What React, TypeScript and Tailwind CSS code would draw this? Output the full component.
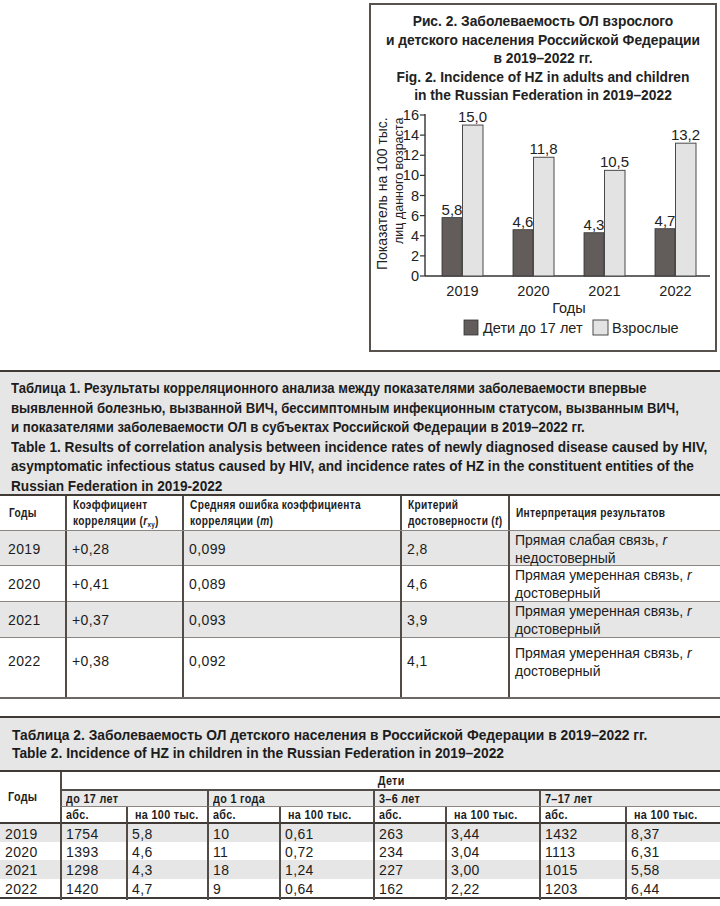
import React from 'react';

const sans = "font-['Liberation_Sans',Arial,sans-serif]";

const bars = [
  { year: '2019', kids: 5.8, adults: 15.0 },
  { year: '2020', kids: 4.6, adults: 11.8 },
  { year: '2021', kids: 4.3, adults: 10.5 },
  { year: '2022', kids: 4.7, adults: 13.2 },
];

const Chart = () => {
  const base = 276;
  const k = 161 / 16;
  const fmt = (v: number) => v.toFixed(1).replace('.', ',');
  return (
    <svg width={344} height={244} viewBox="371 106 344 244" className="block">
      <g fontFamily="Liberation Sans, Arial, sans-serif" fill="#222">
        {[0, 2, 4, 6, 8, 10, 12, 14, 16].map((v) => (
          <g key={v}>
            <line x1={420} x2={425} y1={base - v * k} y2={base - v * k} stroke="#333" strokeWidth={1.2} />
            <text x={419} y={base - v * k + 5} fontSize={14.5} textAnchor="end">{v}</text>
          </g>
        ))}
        <line x1={425} x2={425} y1={114} y2={base} stroke="#333" strokeWidth={1.4} />
        <line x1={425} x2={710} y1={base} y2={base} stroke="#333" strokeWidth={1.4} />
        {bars.map((b, i) => {
          const x = 442 + 71 * i;
          const hk = b.kids * k;
          const ha = b.adults * k;
          return (
            <g key={b.year}>
              <rect x={x} y={base - hk} width={20} height={hk} fill="#625d5a" stroke="#333" strokeWidth={0.8} />
              <rect x={x + 20.5} y={base - ha} width={20.5} height={ha} fill="#e3e3e3" stroke="#4a4a4a" strokeWidth={1} />
              <text x={x + 10} y={base - hk - 3} fontSize={15} textAnchor="middle">{fmt(b.kids)}</text>
              <text x={x + 30.5} y={base - ha - 3} fontSize={15} textAnchor="middle">{fmt(b.adults)}</text>
              <text x={x + 20.5} y={295.5} fontSize={14.5} textAnchor="middle">{b.year}</text>
            </g>
          );
        })}
        <text x={569} y={313} fontSize={14.5} textAnchor="middle">Годы</text>
        <rect x={464} y={320} width={14} height={15} fill="#625d5a" stroke="#333" strokeWidth={0.8} />
        <text x={483} y={333} fontSize={14.5}>Дети до 17 лет</text>
        <rect x={593} y={320} width={15} height={15} fill="#e3e3e3" stroke="#4a4a4a" strokeWidth={1} />
        <text x={612} y={333} fontSize={14.5}>Взрослые</text>
        <text transform="translate(387 270) rotate(-90)" fontSize={14}>Показатель на 100 тыс.</text>
        <text transform="translate(402.5 244) rotate(-90)" fontSize={12.5}>лиц данного возраста</text>
      </g>
    </svg>
  );
};

const t1Rows = [
  { y: '2019', r: '+0,28', m: '0,099', t: '2,8', a: 'Прямая слабая связь, ', b: 'недостоверный', h: 'h-[35px]', bg: 'bg-[#e6e6e6]', pb: '' },
  { y: '2020', r: '+0,41', m: '0,089', t: '4,6', a: 'Прямая умеренная связь, ', b: 'достоверный', h: 'h-[36px]', bg: 'bg-white', pb: '' },
  { y: '2021', r: '+0,37', m: '0,093', t: '3,9', a: 'Прямая умеренная связь, ', b: 'достоверный', h: 'h-[36px]', bg: 'bg-[#e6e6e6]', pb: '' },
  { y: '2022', r: '+0,38', m: '0,092', t: '4,1', a: 'Прямая умеренная связь, ', b: 'достоверный', h: 'h-[60px]', bg: 'bg-white', pb: 'pb-[12px]' },
];

const t2Rows = [
  ['2019', '1754', '5,8', '10', '0,61', '263', '3,44', '1432', '8,37'],
  ['2020', '1393', '4,6', '11', '0,72', '234', '3,04', '1113', '6,31'],
  ['2021', '1298', '4,3', '18', '1,24', '227', '3,00', '1015', '5,58'],
  ['2022', '1420', '4,7', '9', '0,64', '162', '2,22', '1203', '6,44'],
];

const cols1 = 'grid grid-cols-[65px_117px_218px_108px_212px]';
const cols2 = 'grid grid-cols-[60px_66px_81px_72px_94px_72px_94px_86px_95px]';
const vline = 'border-l-2 border-[#514c47]';
// condensed bold look: no narrow face is installed, so squeeze Liberation Sans Bold
const squeeze = 'origin-left scale-x-[0.83] whitespace-nowrap';
const squeezeRu = 'origin-left scale-x-[0.875] whitespace-nowrap';
const squeezeEn = 'origin-left scale-x-[0.909] whitespace-nowrap';
const squeezeHead = 'origin-left scale-x-[0.78] whitespace-nowrap';

export default function App() {
  return (
    <div className="w-[720px] h-[906px] overflow-hidden bg-white text-[#1c1c1c]">
      <div className="flex justify-end pt-[3px] pr-[3px]">
        <div className="w-[348px] h-[349px] border-2 border-[#57524d] flex flex-col">
          <div className={`h-[101px] pt-[8px] text-center text-[13.8px] leading-[18.5px] font-bold text-[#222] ${sans}`}>
            <div>Рис. 2. Заболеваемость ОЛ взрослого</div>
            <div>и детского населения Российской Федерации</div>
            <div>в 2019–2022 гг.</div>
            <div>Fig. 2. Incidence of HZ in adults and children</div>
            <div>in the Russian Federation in 2019–2022</div>
          </div>
          <Chart />
        </div>
      </div>

      <div className="mt-[18px] border-t-2 border-b-2 border-[#3f3a36] border-b-[#6d6863]">
        <div className={`h-[122px] bg-[#e6e6e6] pl-[11px] pt-[6px] text-[15px] leading-[19.5px] font-bold ${sans}`}>
          <div className={squeezeRu}>Таблица 1. Результаты корреляционного анализа между показателями заболеваемости впервые</div>
          <div className={squeezeRu}>выявленной болезнью, вызванной ВИЧ, бессимптомным инфекционным статусом, вызванным ВИЧ,</div>
          <div className={squeezeRu}>и показателями заболеваемости ОЛ в субъектах Российской Федерации в 2019–2022 гг.</div>
          <div className={squeezeEn}>Table 1. Results of correlation analysis between incidence rates of newly diagnosed disease caused by HIV,</div>
          <div className={squeezeEn}>asymptomatic infectious status caused by HIV, and incidence rates of HZ in the constituent entities of the</div>
          <div className={squeezeEn}>Russian Federation in 2019-2022</div>
        </div>
        <div className={`${cols1} h-[36px] border-t-2 border-[#3f3a36] text-[13px] leading-[16.5px] font-bold tracking-[0.4px] ${sans}`}>
          <div className="flex items-center pl-[9px]"><div className={squeezeHead}>Годы</div></div>
          <div className={`flex items-center pl-[6px] ${vline}`}>
            <div className={squeezeHead}>Коэффициент<br />корреляции (<i>r</i><sub className="text-[8px]">xy</sub>)</div>
          </div>
          <div className={`flex items-center pl-[6px] ${vline}`}>
            <div className={squeezeHead}>Средняя ошибка коэффициента<br />корреляции (<i>m</i>)</div>
          </div>
          <div className={`flex items-center pl-[6px] ${vline}`}>
            <div className={squeezeHead}>Критерий<br />достоверности (<i>t</i>)</div>
          </div>
          <div className={`flex items-center pl-[6px] ${vline}`}>
            <div className={squeezeHead}>Интерпретация результатов</div>
          </div>
        </div>
        {t1Rows.map((r) => (
          <div key={r.y} className={`${cols1} ${r.h} ${r.bg} border-t border-[#8b8681] text-[14px] ${sans}`}>
            <div className={`flex items-center pl-[8px] tracking-[0.4px] ${r.pb}`}>{r.y}</div>
            <div className={`flex items-center pl-[5px] tracking-[0.4px] ${r.pb} ${vline}`}>{r.r}</div>
            <div className={`flex items-center pl-[5px] tracking-[0.4px] ${r.pb} ${vline}`}>{r.m}</div>
            <div className={`flex items-center pl-[5px] tracking-[0.4px] ${r.pb} ${vline}`}>{r.t}</div>
            <div className={`flex items-center pl-[5px] leading-[18px] ${r.pb} ${vline}`}>
              <div>{r.a}<i>r</i><br />{r.b}</div>
            </div>
          </div>
        ))}
      </div>

      <div className="mt-[17px] border-t-2 border-b-2 border-[#3f3a36]">
        <div className={`h-[52px] bg-[#e6e6e6] pl-[12px] pt-[9px] text-[13.8px] leading-[18px] font-bold ${sans}`}>
          <div>Таблица 2. Заболеваемость ОЛ детского населения в Российской Федерации в 2019–2022 гг.</div>
          <div>Table 2. Incidence of HZ in children in the Russian Federation in 2019–2022</div>
        </div>
        <div className={`${cols2} grid-rows-[19px_16px_17px] border-t-2 border-[#3f3a36] text-[13px] font-bold tracking-[0.4px] ${sans}`}>
          <div className="row-span-3 flex items-center pl-[8px] border-b-2 border-[#3f3a36]"><div className={squeeze}>Годы</div></div>
          <div className={`col-span-8 flex items-center justify-center border-b-2 border-b-[#514c47] ${vline}`}>
            <div className="origin-center scale-x-[0.83]">Дети</div>
          </div>
          {['до 17 лет', 'до 1 года', '3–6 лет', '7–17 лет'].map((g) => (
            <div key={g} className={`col-span-2 flex items-center pl-[4px] bg-[#e9e9e9] border-b border-b-[#8b8681] ${vline}`}>
              <div className={squeeze}>{g}</div>
            </div>
          ))}
          {[0, 1, 2, 3].flatMap((i) => [
            <div key={`a${i}`} className={`flex items-center pl-[4px] border-b-2 border-b-[#3f3a36] ${vline}`}><div className={squeeze}>абс.</div></div>,
            <div key={`b${i}`} className={`flex items-center pl-[7px] border-b-2 border-b-[#3f3a36] ${vline}`}><div className={squeeze}>на 100 тыс.</div></div>,
          ])}
        </div>
        {t2Rows.map((r, i) => (
          <div key={r[0]} className={`${cols2} ${i === 2 ? 'h-[19px]' : 'h-[18px]'} ${i % 2 === 0 ? 'bg-[#e6e6e6]' : 'bg-white'} text-[14px] tracking-[0.35px] ${sans}`}>
            {r.map((c, j) => (
              <div key={j} className={`flex items-center ${j === 0 ? 'pl-[5px]' : `pl-[4px] ${vline}`}`}>{c}</div>
            ))}
          </div>
        ))}
      </div>
    </div>
  );
}
